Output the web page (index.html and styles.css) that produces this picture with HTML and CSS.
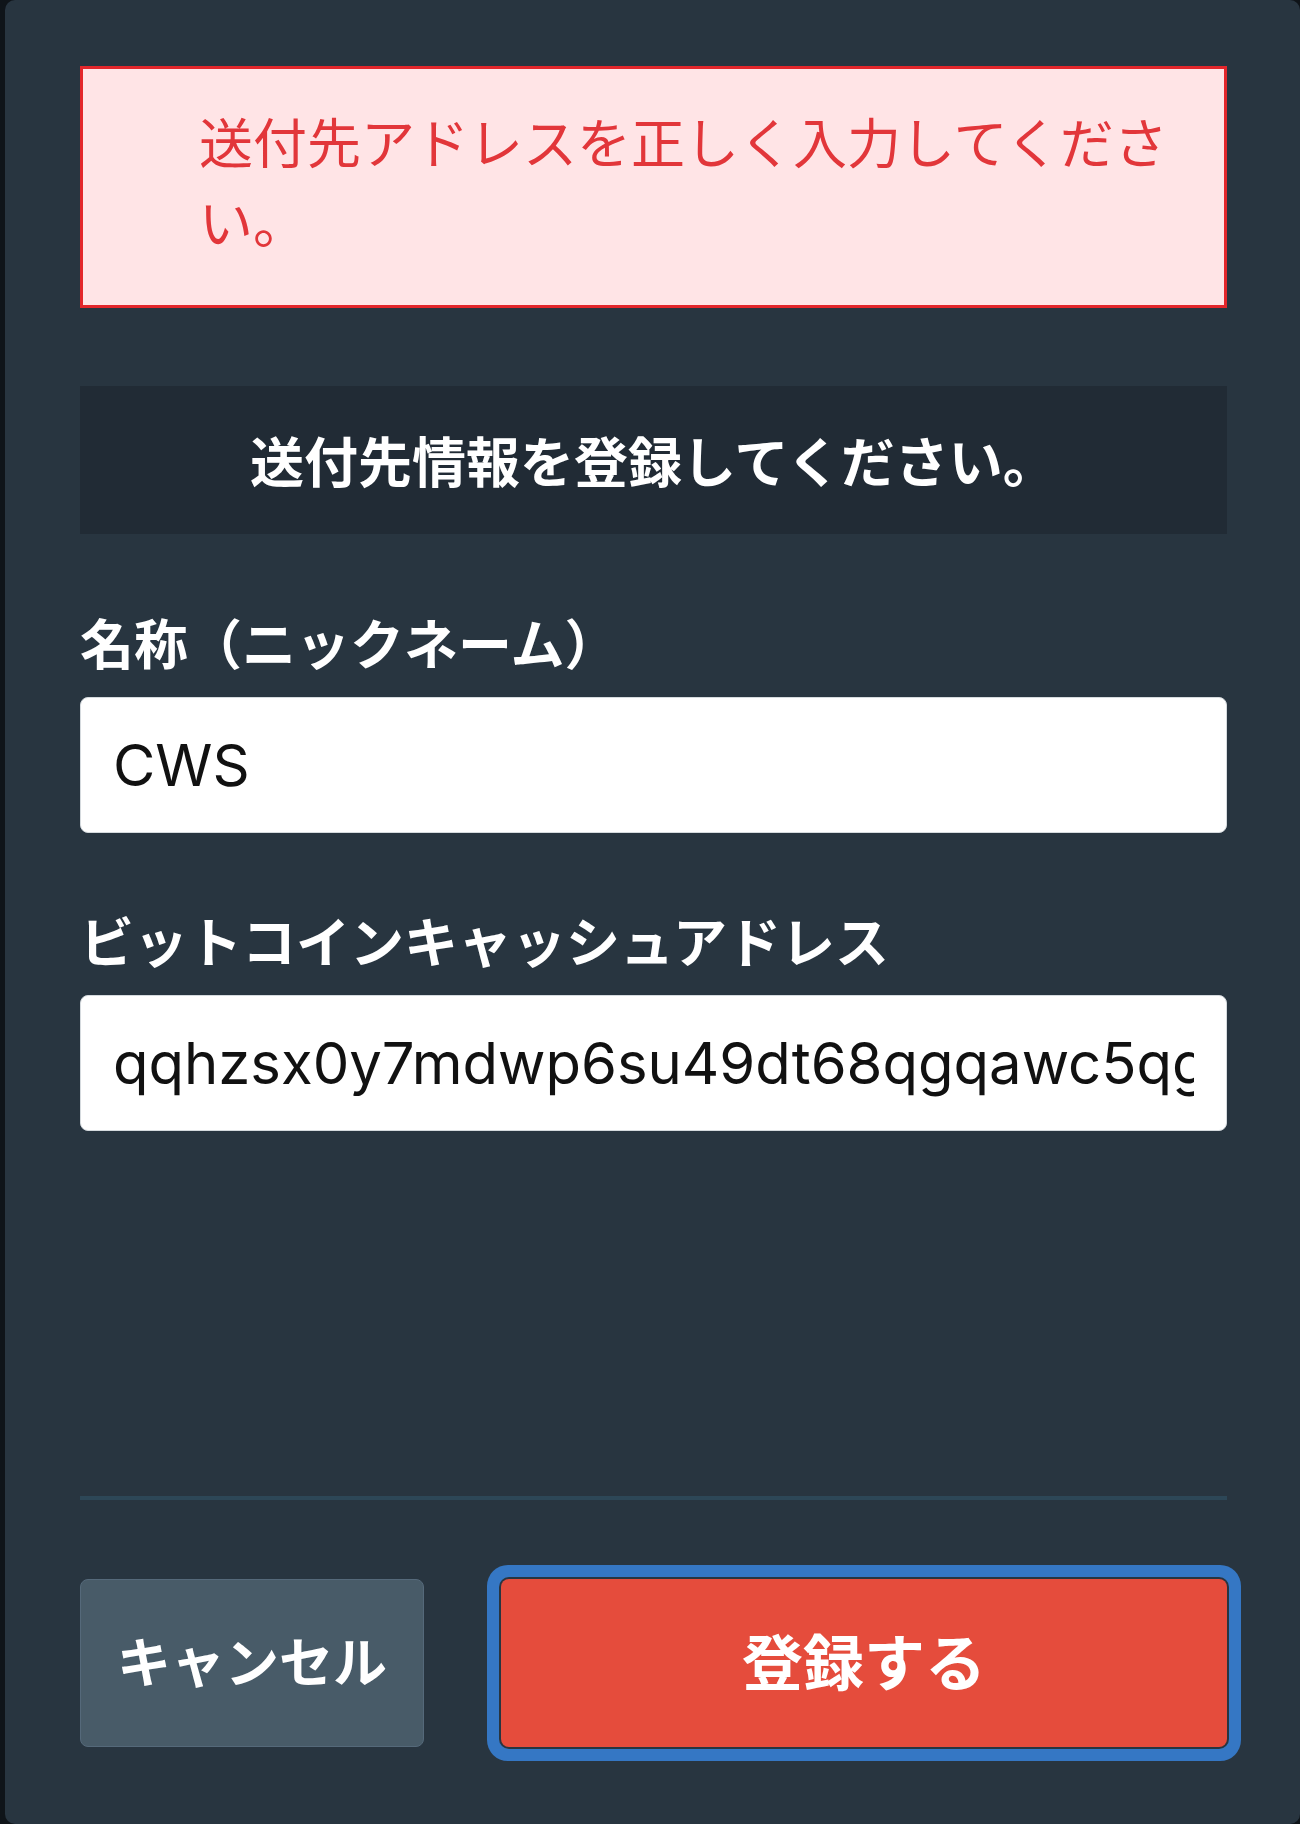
FILE: index.html
```html
<!DOCTYPE html>
<html lang="ja">
<head>
    <meta charset="UTF-8">
    <meta name="viewport" content="width=device-width, initial-scale=1.0">
    <title>送付先の登録</title>
    <link rel="stylesheet" href="styles.css">
</head>
<body>
    <div class="panel">
        <form class="form">
            <div class="form-errors">
                <ul>
                    <li>送付先アドレスを正しく入力してください。</li>
                </ul>
            </div>
            <p class="form-notice">送付先情報を登録してください。</p>
            <div class="field">
                <label for="name">名称（ニックネーム）</label>
                <input id="name" type="text" value="CWS">
            </div>
            <div class="field">
                <label for="address">ビットコインキャッシュアドレス</label>
                <input id="address" type="text" value="qqhzsx0y7mdwp6su49dt68qgqawc5qgt3hrlfnjd8x">
            </div>
        </form>
        <div class="form-footer">
            <button type="button" class="btn btn-cancel">キャンセル</button>
            <button type="submit" class="btn btn-submit is-focus">登録する</button>
        </div>
    </div>
</body>
</html>
```

FILE: styles.css
```css
* {
    box-sizing: border-box;
}
body {
    margin: 0;
    background-color: #0f1419;
    font-family: "Noto Sans CJK JP", sans-serif;
    color: #ffffff;
}
.panel {
    display: flex;
    flex-direction: column;
    min-height: 100vh;
    margin-left: 5px;
    padding: 66px 73px 77px 75px;
    background-color: #283540;
    border-radius: 10px;
}
.form-errors {
    background-color: #ffe4e6;
    border: 3px solid #e3262b;
    padding: 32px 40px 44px 116px;
    margin-bottom: 78px;
}
.form-errors ul {
    list-style: none;
    margin: 0;
    padding: 0;
}
.form-errors li {
    color: #e2363a;
    font-size: 54px;
    line-height: 80px;
}
.form-notice {
    background-color: #212b35;
    margin: 0 0 69px;
    padding: 35px 20px;
    text-align: center;
    font-size: 54px;
    font-weight: bold;
    line-height: 78px;
}
.field + .field {
    margin-top: 68px;
}
.field label {
    display: block;
    font-size: 54px;
    font-weight: bold;
    line-height: 78px;
    margin-bottom: 16px;
}
.field input {
    display: block;
    width: 100%;
    height: 136px;
    padding: 0 32px;
    background-color: #ffffff;
    border: 1px solid #d5dade;
    border-radius: 8px;
    font-family: Inter, "Liberation Sans", sans-serif;
    font-size: 58px;
    color: #111111;
    outline: none;
}
.form-footer {
    display: flex;
    gap: 77px;
    margin-top: auto;
    padding-top: 79px;
    border-top: 4px solid #2d4757;
}
.btn {
    height: 168px;
    padding: 0 0 8px;
    border-radius: 8px;
    font-family: "Noto Sans CJK JP", sans-serif;
    font-weight: bold;
    color: #ffffff;
    cursor: pointer;
}
.btn-cancel {
    width: 344px;
    background-color: #485b68;
    border: 1px solid #55697a;
    font-size: 54px;
}
.btn-submit {
    flex: 1;
    background-color: #e54c3c;
    border: none;
    font-size: 61px;
}
.btn-submit.is-focus,
.btn-submit:focus {
    outline: none;
    box-shadow: 0 0 0 2px #283540, 0 0 0 14px #3577c4;
}
```
